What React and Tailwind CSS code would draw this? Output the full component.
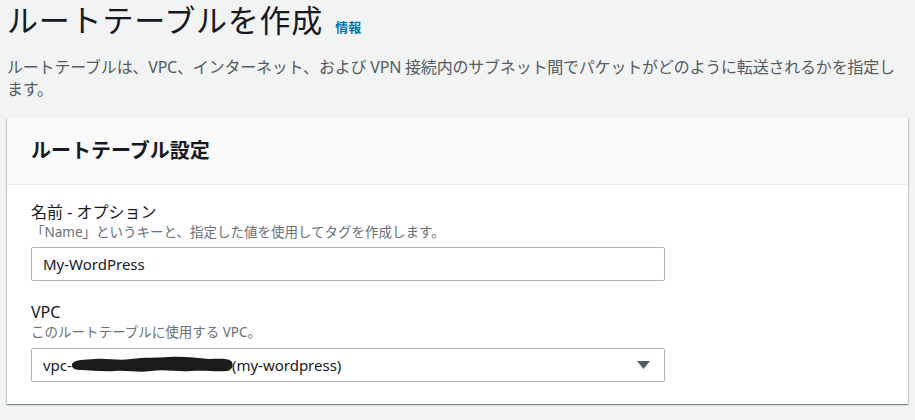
import React from "react";

const font = { fontFamily: '"Noto Sans", "Noto Sans CJK JP", sans-serif' };

function Redaction() {
  return (
    <svg width="162" height="20" viewBox="0 0 162 20" className="inline-block align-middle -mx-[1px]">
      <path
        d="M1 9 C 4 4, 14 5, 24 4 C 36 3, 48 6, 60 4 C 74 2, 86 3, 98 2 C 112 1, 126 3, 138 4 C 148 4, 156 3, 160 6 C 163 9, 162 15, 156 16 C 146 17, 134 15, 120 16 C 106 17, 94 14, 80 16 C 68 18, 56 15, 44 16 C 32 17, 20 15, 10 15 C 4 15, 0 13, 1 9 Z"
        fill="#1b1b1b"
      />
    </svg>
  );
}

function Field({ label, desc, children, className = "" }) {
  return (
    <div className={className}>
      <div className="text-[16px] leading-[22px] text-[#16191f]">{label}</div>
      <div className="text-[13.5px] leading-[18px] text-[#687078]">{desc}</div>
      {children}
    </div>
  );
}

export default function App() {
  return (
    <div className="min-h-screen w-full bg-[#f2f3f3] px-[7px] pt-[2px]" style={font}>
      <div className="flex items-baseline gap-[12px]">
        <h1 className="text-[31px] leading-[36px] font-normal text-[#16191f] tracking-[0.8px]">ルートテーブルを作成</h1>
        <a className="text-[13px] font-bold text-[#0073bb]">情報</a>
      </div>
      <p className="mt-[18px] text-[16px] leading-[22px] text-[#545b64] tracking-[-0.2px]">
        ルートテーブルは、VPC、インターネット、および VPN 接続内のサブネット間でパケットがどのように転送されるかを指定し
        <br />
        ます。
      </p>
      <div className="mt-[18px] bg-white shadow-[0_1px_1px_0_rgba(0,28,36,0.3),1px_1px_1px_0_rgba(0,28,36,0.15),-1px_1px_1px_0_rgba(0,28,36,0.15)]">
        <div className="h-[67px] flex items-center px-[24px] bg-[#fafafa] border-b border-[#eaeded]">
          <h2 className="text-[20px] font-bold text-[#16191f]">ルートテーブル設定</h2>
        </div>
        <div className="px-[24px] pt-[16px] pb-[22px]">
          <Field label="名前 - オプション" desc="「Name」というキーと、指定した値を使用してタグを作成します。">
            <div className="mt-[6px] w-[634px] h-[34px] border border-[#aab7b8] rounded-[2px] bg-white flex items-center pl-[11px] text-[15px] text-[#16191f]">
              My-WordPress
            </div>
          </Field>
          <Field className="mt-[20px]" label="VPC" desc="このルートテーブルに使用する VPC。">
            <div className="mt-[7px] w-[634px] h-[34px] border border-[#aab7b8] rounded-[2px] bg-white flex items-center pl-[11px] pr-[14px] text-[15px] text-[#16191f]">
              <span>vpc-</span>
              <Redaction />
              <span>(my-wordpress)</span>
              <svg width="13" height="9" viewBox="0 0 13 9" className="ml-auto">
                <path d="M0 0 H13 L6.5 8 Z" fill="#545b64" />
              </svg>
            </div>
          </Field>
        </div>
      </div>
    </div>
  );
}
